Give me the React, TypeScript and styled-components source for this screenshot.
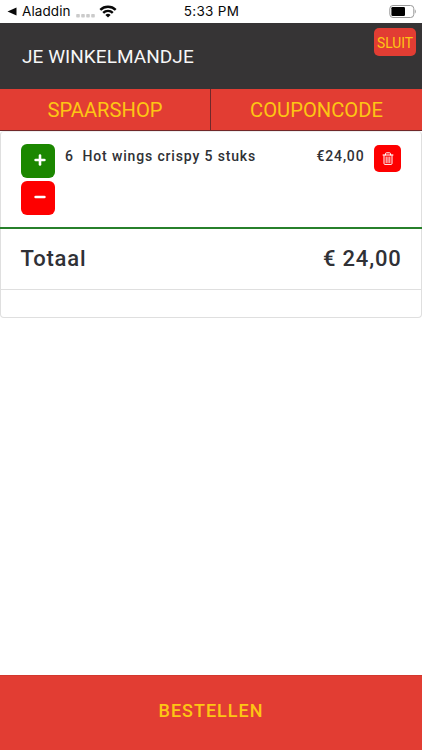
import React from 'react';
import styled, { createGlobalStyle } from 'styled-components';

const GlobalStyle = createGlobalStyle`
  * { box-sizing: border-box; }
  body { margin: 0; background: #fff; font-family: Roboto, sans-serif; color: #303136; }
  button { font: inherit; border: 0; padding: 0; margin: 0; cursor: pointer; }
`;

const Screen = styled.div`
  width: 100%;
  height: 100vh;
  min-height: 750px;
  display: flex;
  flex-direction: column;
  overflow: hidden;
`;

const StatusBar = styled.div`
  height: 23px;
  flex: none;
  display: grid;
  grid-template-columns: 1fr auto 1fr;
  align-items: center;
  padding: 0 6px 0 7px;
  font: 400 13.5px/23px Inter, sans-serif;
  color: #080808;
`;

const StatusGroup = styled.div<{ $end?: boolean }>`
  display: flex;
  align-items: center;
  height: 23px;
  justify-content: ${(p) => (p.$end ? 'flex-end' : 'flex-start')};
`;

const AppName = styled.span`
  margin: 0 5px 0 5px;
  letter-spacing: 0.1px;
`;

const Clock = styled.span`
  letter-spacing: 0.3px;
`;

const Header = styled.header`
  height: 66px;
  flex: none;
  display: flex;
  justify-content: space-between;
  align-items: flex-start;
  background: #363435;
  padding: 5px 6px 0 22px;
`;

const Title = styled.h1`
  margin: 17px 0 0;
  font-size: 19px;
  line-height: 24px;
  font-weight: 400;
  letter-spacing: 0.05px;
  color: #f7f7f7;
`;

const CloseButton = styled.button`
  && { font-size: 13.8px; padding-top: 2px; }
  width: 42px;
  height: 28px;
  border-radius: 5px;
  background: #e23d33;
  color: #fdc614;
`;

const Tabs = styled.nav`
  height: 42px;
  flex: none;
  display: grid;
  grid-template-columns: 211px 1fr;
`;

const Tab = styled.button`
  && { font-size: 20.2px; }
  background: #e23d33;
  color: #fdc614;
  border-bottom: 1px solid #70282a;
  &:first-child { border-right: 1px solid #70282a; }
`;

const Card = styled.section`
  height: 187px;
  flex: none;
  display: flex;
  flex-direction: column;
  border: 1px solid #dfdfdf;
  border-top-color: #eee;
  border-radius: 4px;
`;

const ItemRow = styled.div`
  height: 95px;
  display: flex;
  align-items: flex-start;
  padding: 12px 20px 0 20px;
  font-size: 14px;
  font-weight: 500;
  line-height: 24px;
  letter-spacing: 0.85px;
`;

const Stepper = styled.div`
  display: flex;
  flex-direction: column;
  gap: 3px;
  width: 34px;
  margin-right: 10px;
`;

const StepButton = styled.button<{ $color: string }>`
  height: 34px;
  display: flex;
  align-items: center;
  justify-content: center;
  padding: 0 0 2px 4px !important;
  border-radius: 6px;
  background: ${(p) => p.$color};
`;

const Quantity = styled.span`
  width: 17.5px;
`;

const ItemName = styled.span`
  flex: 1;
`;

const Price = styled.span`
  margin-right: 9.5px;
`;

const DeleteButton = styled.button`
  width: 27px;
  height: 27px;
  margin-top: 1px !important;
  display: flex;
  align-items: center;
  justify-content: center;
  border-radius: 5px;
  background: #fe0000;
`;

const TotalRow = styled.div`
  height: 63px;
  display: flex;
  justify-content: space-between;
  align-items: center;
  margin: 0 -1px;
  padding: 0 20.5px 1px 20.5px;
  border-top: 2px solid #27802b;
  border-bottom: 1px solid #dfdfdf;
  font-size: 22px;
  font-weight: 500;
  letter-spacing: 0.8px;
`;

const Spacer = styled.div`
  flex: 1;
`;

const OrderButton = styled.button`
  && { font-size: 18px; font-weight: 500; }
  height: 75px;
  flex: none;
  background: #e23d33;
  border-top: 1px solid #d3372e;
  color: #fdc614;
  letter-spacing: 1px;
  padding-bottom: 5px !important;
`;

const BackArrow = () => (
  <svg width="10" height="9" viewBox="0 0 10 9">
    <path d="M.5 4.5 9.5 0.5v8z" fill="#080808" />
  </svg>
);

const SignalDots = () => (
  <svg width="20" height="4" viewBox="0 0 20 4" style={{ marginTop: 8 }}>
    {[0, 5, 10, 15].map((x) => (
      <rect key={x} x={x + 0.2} y="0" width="3.6" height="3.6" rx="0.8" fill="#cbcbcb" />
    ))}
  </svg>
);

const Wifi = () => (
  <svg width="18" height="13" viewBox="0 0 18 13" style={{ marginLeft: 3 }}>
    <g fill="none" stroke="#080808" strokeWidth="2.4">
      <path d="M1.3 4.9a11 11 0 0 1 15.4 0" />
      <path d="M4.2 7.9a6.8 6.8 0 0 1 9.6 0" />
    </g>
    <path d="M6.4 9.9a3.8 3.8 0 0 1 5.2 0L9 12.6z" fill="#080808" />
  </svg>
);

const Battery = () => (
  <svg width="27" height="13" viewBox="0 0 27 13">
    <rect x="0.8" y="0.5" width="24" height="12" rx="3.2" fill="none" stroke="#999" />
    <rect x="2.4" y="2" width="13.6" height="9" rx="1.2" fill="#000" />
    <path d="M25.8 4.5c1.3.6 1.3 3.4 0 4z" fill="#999" />
  </svg>
);

const Sign = ({ plus }: { plus?: boolean }) => (
  <svg width="12" height="12" viewBox="0 0 12 12" stroke="#fff" strokeWidth="2.6" strokeLinecap="round">
    <path d="M1.6 6h8.8" />
    {plus && <path d="M6 1.6v8.8" />}
  </svg>
);

const Trash = () => (
  <svg width="12" height="13" viewBox="0 0 12 13" fill="none" stroke="#fff" strokeLinecap="round" strokeLinejoin="round">
    <path d="M1 3h10M3.5 3V1.7Q3.5.8 4.4.8h3.2q.9 0 .9.9V3M2 3v8.5q0 .9 1 .9h6q1 0 1-.9V3" />
    <path d="M4.2 5v5.6M6 5v5.6M7.8 5v5.6" strokeWidth="0.9" />
  </svg>
);

export default function App() {
  return (
    <Screen>
      <GlobalStyle />
      <StatusBar>
        <StatusGroup>
          <BackArrow />
          <AppName>Aladdin</AppName>
          <SignalDots />
          <Wifi />
        </StatusGroup>
        <Clock>5:33 PM</Clock>
        <StatusGroup $end>
          <Battery />
        </StatusGroup>
      </StatusBar>
      <Header>
        <Title>JE WINKELMANDJE</Title>
        <CloseButton>SLUIT</CloseButton>
      </Header>
      <Tabs>
        <Tab>SPAARSHOP</Tab>
        <Tab>COUPONCODE</Tab>
      </Tabs>
      <Card>
        <ItemRow>
          <Stepper>
            <StepButton $color="#1b8700" aria-label="Meer"><Sign plus /></StepButton>
            <StepButton $color="#fe0000" aria-label="Minder"><Sign /></StepButton>
          </Stepper>
          <Quantity>6</Quantity>
          <ItemName>Hot wings crispy 5 stuks</ItemName>
          <Price>€24,00</Price>
          <DeleteButton aria-label="Verwijderen"><Trash /></DeleteButton>
        </ItemRow>
        <TotalRow>
          <span>Totaal</span>
          <span>€ 24,00</span>
        </TotalRow>
      </Card>
      <Spacer />
      <OrderButton>BESTELLEN</OrderButton>
    </Screen>
  );
}
